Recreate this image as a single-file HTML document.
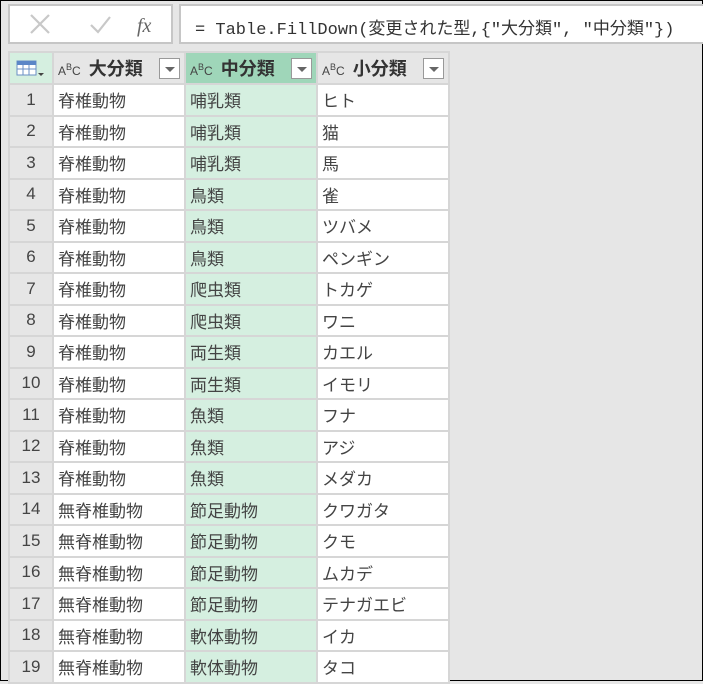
<!DOCTYPE html>
<html><head><meta charset="utf-8"><style>
*{margin:0;padding:0;box-sizing:border-box}
body{width:703px;height:681px;overflow:hidden;background:#e6e6e6;border:1px solid #000;position:relative;font-family:"Liberation Sans","Noto Sans CJK JP",sans-serif}
.fb1{position:absolute;left:7px;top:3px;width:165px;height:40px;background:#fff;border:2px solid #c6c6c6}
.fb2{position:absolute;left:178px;top:3px;width:530px;height:40px;background:#fff;border:2px solid #c6c6c6;font-family:"Liberation Mono","Noto Sans CJK JP",monospace;font-size:17px;color:#333;padding:8px 0 0 14px;white-space:nowrap}
table{position:absolute;left:7px;top:50px;border-collapse:collapse;table-layout:fixed;width:442px}
td{border:2px solid #d6d6d6;height:31.5px;font-size:17px;color:#444;padding:0 0 0 4px;white-space:nowrap;overflow:hidden;background:#fff}
td.n{background:#e6e6e6;text-align:center;padding:0;color:#444}
td.g{background:#d5efe0}
tr.h td{height:32px;background:#e6e6e6;font-weight:bold;font-size:18px;color:#333;position:relative}
tr.h td.gh{background:#9fd6b9}
tr.h td.c0{background:#d5efe0}
.abc{font-size:12px;font-weight:normal;color:#444;margin-right:8px}
.abc sup{font-size:9px}
.dd{position:absolute;right:4px;top:5px;width:21px;height:21px;background:#fff;border:1px solid #999}
.dd:after{content:"";position:absolute;left:5px;top:8px;border-left:5px solid transparent;border-right:5px solid transparent;border-top:5px solid #666}
</style></head><body>
<div class="fb1">
<svg width="165" height="40" style="position:absolute;left:0;top:0">
<path d="M21 9 L39 27 M39 9 L21 27" stroke="#c8c8c8" stroke-width="2.2" fill="none"/>
<path d="M81 19 L88 26 L100 11" stroke="#c8c8c8" stroke-width="2.2" fill="none"/>
<text x="127" y="26" font-family="Liberation Serif" font-style="italic" font-size="20" fill="#666">fx</text>
</svg></div>
<div class="fb2">= Table.FillDown(変更された型,{"大分類", "中分類"})</div>
<table>
<colgroup><col style="width:44px"><col style="width:132px"><col style="width:132px"><col style="width:132px"></colgroup>
<tr class="h"><td class="c0" style="padding:0"><svg width="40" height="28" style="display:block;margin:auto"><rect x="6" y="7" width="19" height="14" fill="#fff" stroke="#6a8fc4"/><rect x="6" y="7" width="19" height="4" fill="#5b86c7"/><path d="M6 15H25M12 11V21M18 11V21" stroke="#6a8fc4"/><path d="M27 19h6l-3 3z" fill="#444"/></svg></td>
<td><span class="abc">A<sup>B</sup>C</span>大分類<span class="dd"></span></td>
<td class="gh"><span class="abc">A<sup>B</sup>C</span>中分類<span class="dd"></span></td>
<td><span class="abc">A<sup>B</sup>C</span>小分類<span class="dd"></span></td></tr>
<tr><td class="n">1</td><td>脊椎動物</td><td class="g">哺乳類</td><td>ヒト</td></tr>
<tr><td class="n">2</td><td>脊椎動物</td><td class="g">哺乳類</td><td>猫</td></tr>
<tr><td class="n">3</td><td>脊椎動物</td><td class="g">哺乳類</td><td>馬</td></tr>
<tr><td class="n">4</td><td>脊椎動物</td><td class="g">鳥類</td><td>雀</td></tr>
<tr><td class="n">5</td><td>脊椎動物</td><td class="g">鳥類</td><td>ツバメ</td></tr>
<tr><td class="n">6</td><td>脊椎動物</td><td class="g">鳥類</td><td>ペンギン</td></tr>
<tr><td class="n">7</td><td>脊椎動物</td><td class="g">爬虫類</td><td>トカゲ</td></tr>
<tr><td class="n">8</td><td>脊椎動物</td><td class="g">爬虫類</td><td>ワニ</td></tr>
<tr><td class="n">9</td><td>脊椎動物</td><td class="g">両生類</td><td>カエル</td></tr>
<tr><td class="n">10</td><td>脊椎動物</td><td class="g">両生類</td><td>イモリ</td></tr>
<tr><td class="n">11</td><td>脊椎動物</td><td class="g">魚類</td><td>フナ</td></tr>
<tr><td class="n">12</td><td>脊椎動物</td><td class="g">魚類</td><td>アジ</td></tr>
<tr><td class="n">13</td><td>脊椎動物</td><td class="g">魚類</td><td>メダカ</td></tr>
<tr><td class="n">14</td><td>無脊椎動物</td><td class="g">節足動物</td><td>クワガタ</td></tr>
<tr><td class="n">15</td><td>無脊椎動物</td><td class="g">節足動物</td><td>クモ</td></tr>
<tr><td class="n">16</td><td>無脊椎動物</td><td class="g">節足動物</td><td>ムカデ</td></tr>
<tr><td class="n">17</td><td>無脊椎動物</td><td class="g">節足動物</td><td>テナガエビ</td></tr>
<tr><td class="n">18</td><td>無脊椎動物</td><td class="g">軟体動物</td><td>イカ</td></tr>
<tr><td class="n">19</td><td>無脊椎動物</td><td class="g">軟体動物</td><td>タコ</td></tr>
</table>
</body></html>
